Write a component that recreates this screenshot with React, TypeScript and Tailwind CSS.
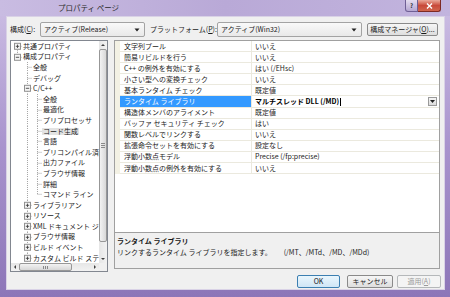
import React from "react";

type TreeNode = {
  label: string;
  level: number;
  exp?: "+" | "-";
  sel?: boolean;
  v: [number, number];
};

const H = 10.6;

const tree: TreeNode[] = [
  { label: "共通プロパティ", level: 0, exp: "+", v: [H / 2, H] },
  { label: "構成プロパティ", level: 0, exp: "-", v: [0, H / 2] },
  { label: "全般", level: 1, v: [0, H] },
  { label: "デバッグ", level: 1, v: [0, H] },
  { label: "C/C++", level: 1, exp: "-", v: [0, H] },
  { label: "全般", level: 2, v: [0, H] },
  { label: "最適化", level: 2, v: [0, H] },
  { label: "プリプロセッサ", level: 2, v: [0, H] },
  { label: "コード生成", level: 2, sel: true, v: [0, H] },
  { label: "言語", level: 2, v: [0, H] },
  { label: "プリコンパイル済みヘッダー", level: 2, v: [0, H] },
  { label: "出力ファイル", level: 2, v: [0, H] },
  { label: "ブラウザ情報", level: 2, v: [0, H] },
  { label: "詳細", level: 2, v: [0, H] },
  { label: "コマンド ライン", level: 2, v: [0, H / 2] },
  { label: "ライブラリアン", level: 1, exp: "+", v: [0, H] },
  { label: "リソース", level: 1, exp: "+", v: [0, H] },
  { label: "XML ドキュメント ジェネレータ", level: 1, exp: "+", v: [0, H] },
  { label: "ブラウザ情報", level: 1, exp: "+", v: [0, H] },
  { label: "ビルド イベント", level: 1, exp: "+", v: [0, H] },
  { label: "カスタム ビルド ステップ", level: 1, exp: "+", v: [0, H] },
];

const props: [string, string][] = [
  ["文字列プール", "いいえ"],
  ["簡易リビルドを行う", "いいえ"],
  ["C++ の例外を有効にする", "はい (/EHsc)"],
  ["小さい型への変換チェック", "いいえ"],
  ["基本ランタイム チェック", "既定値"],
  ["ランタイム ライブラリ", "マルチスレッド DLL (/MD)"],
  ["構造体メンバのアライメント", "既定値"],
  ["バッファ セキュリティ チェック", "はい"],
  ["関数レベルでリンクする", "いいえ"],
  ["拡張命令セットを有効にする", "設定なし"],
  ["浮動小数点モデル", "Precise (/fp:precise)"],
  ["浮動小数点の例外を有効にする", "いいえ"],
];

function Junction({ node }: { node: TreeNode }) {
  const m = H / 2;
  return (
    <svg width="10" height={H} viewBox={`0 0 10 ${H}`} className="shrink-0">
      <line x1="5.5" y1={node.v[0]} x2="5.5" y2={node.v[1]} stroke="#a5a5a5" strokeDasharray="1 1" />
      <line x1="5.5" y1={m} x2="10" y2={m} stroke="#a5a5a5" strokeDasharray="1 1" />
      {node.exp && (
        <g>
          <rect x="2.5" y={m - 3} width="6" height="6" fill="#f4f4f4" stroke="#919191" />
          <line x1="3.8" y1={m} x2="7.2" y2={m} stroke="#333" strokeWidth="0.8" />
          {node.exp === "+" && <line x1="5.5" y1={m - 1.7} x2="5.5" y2={m + 1.7} stroke="#333" strokeWidth="0.8" />}
        </g>
      )}
    </svg>
  );
}

function Guide({ on }: { on: boolean }) {
  return (
    <svg width="10" height={H} viewBox={`0 0 10 ${H}`} className="shrink-0">
      {on && <line x1="5.5" y1="0" x2="5.5" y2={H} stroke="#a5a5a5" strokeDasharray="1 1" />}
    </svg>
  );
}

function Arrow({ dir }: { dir: "up" | "down" | "left" | "right" }) {
  const pts = {
    up: "2,5 4,3 6,5",
    down: "2,3 4,5 6,3",
    left: "5,2 3,4 5,6",
    right: "3,2 5,4 3,6",
  }[dir];
  return (
    <div className="w-[8px] h-[8px] shrink-0 flex items-center justify-center">
      <svg width="8" height="8" viewBox="0 0 8 8">
        <polygon points={pts} fill="#404040" />
      </svg>
    </div>
  );
}

function Combo({ text, w }: { text: string; w: string }) {
  return (
    <div className={`${w} h-[15px] rounded-[2px] border border-[#a3a3a3] bg-gradient-to-b from-[#f9f9f9] to-[#e9e9e9] flex items-center pl-[3px] pr-[4px]`}>
      <span className="flex-1 text-[#222]">{text}</span>
      <svg width="6" height="4" viewBox="0 0 6 4">
        <polygon points="0.5,0.5 5.5,0.5 3,3.5" fill="#222" />
      </svg>
    </div>
  );
}

function Btn({ children, w, kind }: { children: React.ReactNode; w: string; kind?: "def" | "off" }) {
  const cls =
    kind === "def"
      ? "border-[#3c7fb1] from-[#eaf6fd] to-[#cfe6f6]"
      : kind === "off"
        ? "border-[#b5b8ba] from-[#f4f4f4] to-[#f4f4f4] text-[#9a9a9a]"
        : "border-[#8a8a8a] from-[#f6f6f6] to-[#dedede]";
  return (
    <div className={`${w} h-[13px] rounded-[2px] border bg-gradient-to-b ${cls} flex items-center justify-center`}>
      {children}
    </div>
  );
}

export default function App() {
  return (
    <div className="w-[450px] h-[297px] overflow-hidden flex flex-col bg-gradient-to-b from-[#cdbfe4] via-[#a893cd] to-[#8d76b8] font-['Noto_Sans_CJK_JP',sans-serif] text-[7px] leading-none text-[#1a1a1a]">
      {/* title bar */}
      <div className="h-[16px] shrink-0 flex items-start bg-gradient-to-r from-[#c9bce2] via-[#b9a9d7] to-[#c2b4de]">
        <div className="pl-[58px] pt-[4px] text-[7.5px] text-[#2a2a2a]">プロパティ ページ</div>
        <div className="flex-1" />
        <div className="flex mr-[9px]">
          <div className="w-[13px] h-[12px] rounded-bl-[3px] border border-[#6f5f95] border-t-0 bg-gradient-to-b from-[#e4dcef] to-[#b5a6d1] flex items-center justify-center text-[6px] font-bold text-[#333]">
            ?
          </div>
          <div className="w-[23px] h-[12px] rounded-br-[3px] border border-[#7d2a24] border-t-0 border-l-0 bg-gradient-to-b from-[#e9a99b] via-[#c8493a] to-[#d0654d] flex items-center justify-center">
            <svg width="7" height="6" viewBox="0 0 7 6">
              <path d="M1 0.5 L6 5.5 M6 0.5 L1 5.5" stroke="#fff" strokeWidth="1.4" />
            </svg>
          </div>
        </div>
      </div>

      {/* client */}
      <div className="flex-1 ml-[6px] mr-[5px] mb-[7px] bg-[#f0f0f0] border border-[#d9d2e6] flex flex-col">
        {/* top row */}
        <div className="mt-[5px] h-[15px] flex items-center">
          <div className="w-[33px] pl-[3px]">
            構成(<span className="underline">C</span>):
          </div>
          <Combo text="アクティブ(Release)" w="w-[105px]" />
          <div className="w-[72px] pl-[5px]">
            プラットフォーム(<span className="underline">P</span>):
          </div>
          <Combo text="アクティブ(Win32)" w="w-[145px]" />
          <div className="ml-[5px]">
            <Btn w="w-[71px]">
              構成マネージャ(<span className="underline">O</span>)...
            </Btn>
          </div>
        </div>

        {/* main */}
        <div className="mt-[3px] h-[232px] flex items-start">
          {/* tree */}
          <div className="ml-[3px] w-[98px] h-[232px] border border-[#828790] bg-white grid grid-cols-[1fr_8px] grid-rows-[1fr_8px] overflow-hidden">
            <div className="overflow-hidden pl-[1px]">
              {tree.map((n, i) => (
                <div key={i} className="h-[10.6px] flex items-center whitespace-nowrap">
                  {Array.from({ length: n.level }).map((_, c) => (
                    <Guide key={c} on={c === 1} />
                  ))}
                  <Junction node={n} />
                  <span className={`ml-[0px] px-[1px] ${n.sel ? "bg-[#e3e3e3]" : ""}`}>{n.label}</span>
                </div>
              ))}
            </div>
            {/* vertical scrollbar */}
            <div className="flex flex-col bg-gradient-to-r from-[#e6e6e6] to-[#f2f2f2]">
              <Arrow dir="up" />
              <div className="h-[193px] rounded-[2px] border border-[#979797] bg-gradient-to-r from-[#f3f3f3] to-[#d8d8d8] flex flex-col items-center justify-center gap-[1px]">
                <div className="w-[4px] h-[1px] bg-[#8a8a8a]" />
                <div className="w-[4px] h-[1px] bg-[#8a8a8a]" />
                <div className="w-[4px] h-[1px] bg-[#8a8a8a]" />
              </div>
              <div className="flex-1" />
              <Arrow dir="down" />
            </div>
            {/* horizontal scrollbar */}
            <div className="flex bg-gradient-to-b from-[#e6e6e6] to-[#f2f2f2]">
              <Arrow dir="left" />
              <div className="w-[53px] rounded-[2px] border border-[#979797] bg-gradient-to-b from-[#f3f3f3] to-[#d8d8d8] flex items-center justify-center gap-[1px]">
                <div className="w-[1px] h-[3px] bg-[#8a8a8a]" />
                <div className="w-[1px] h-[3px] bg-[#8a8a8a]" />
                <div className="w-[1px] h-[3px] bg-[#8a8a8a]" />
              </div>
              <div className="flex-1" />
              <Arrow dir="right" />
            </div>
            <div className="bg-[#f0f0f0]" />
          </div>

          {/* property grid */}
          <div className="ml-[6px] w-[326px] h-[229px] border border-[#a0a0a0] bg-white flex flex-col">
            <div className="flex-1 flex flex-col">
              {props.map(([k, v], i) => {
                const sel = i === 5;
                return (
                  <div key={i} className="h-[11.1px] flex">
                    <div className="w-[5px] bg-[#f3f1e4]" />
                    <div
                      className={`w-[132px] border-r border-b border-[#ebe9de] pl-[4px] flex items-center whitespace-nowrap overflow-hidden ${
                        sel ? "bg-[#3399ff] text-white" : ""
                      }`}
                    >
                      {k}
                    </div>
                    <div className="flex-1 border-b border-[#ebe9de] pl-[3px] flex items-center">
                      <span className={sel ? "font-bold text-black" : ""}>{v}</span>
                      {sel && <div className="w-[1px] h-[8px] bg-black ml-[1px]" />}
                      <div className="flex-1" />
                      {sel && (
                        <div className="mr-[2px] w-[9px] h-[9px] border border-[#9a9a9a] bg-gradient-to-b from-[#f5f5f5] to-[#dcdcdc] flex items-center justify-center">
                          <svg width="5" height="3" viewBox="0 0 5 3">
                            <polygon points="0,0 5,0 2.5,3" fill="#222" />
                          </svg>
                        </div>
                      )}
                    </div>
                  </div>
                );
              })}
            </div>
            <div className="h-[36px] border-t border-[#a0a0a0] bg-[#f0f0f0] pl-[2px] pt-[5px] flex flex-col gap-[4px]">
              <div className="font-bold">ランタイム ライブラリ</div>
              <div className="flex whitespace-nowrap">
                <span>リンクするランタイム ライブラリを指定します。</span>
                <span className="ml-[12px]">(/MT、/MTd、/MD、/MDd)</span>
              </div>
            </div>
          </div>
        </div>

        {/* buttons */}
        <div className="mt-[3px] flex justify-end pr-[3px]">
          <Btn w="w-[43px]" kind="def">
            OK
          </Btn>
          <div className="ml-[7px]">
            <Btn w="w-[46px]">キャンセル</Btn>
          </div>
          <div className="ml-[4px]">
            <Btn w="w-[44px]" kind="off">
              適用(<span className="underline">A</span>)
            </Btn>
          </div>
        </div>
      </div>
    </div>
  );
}
